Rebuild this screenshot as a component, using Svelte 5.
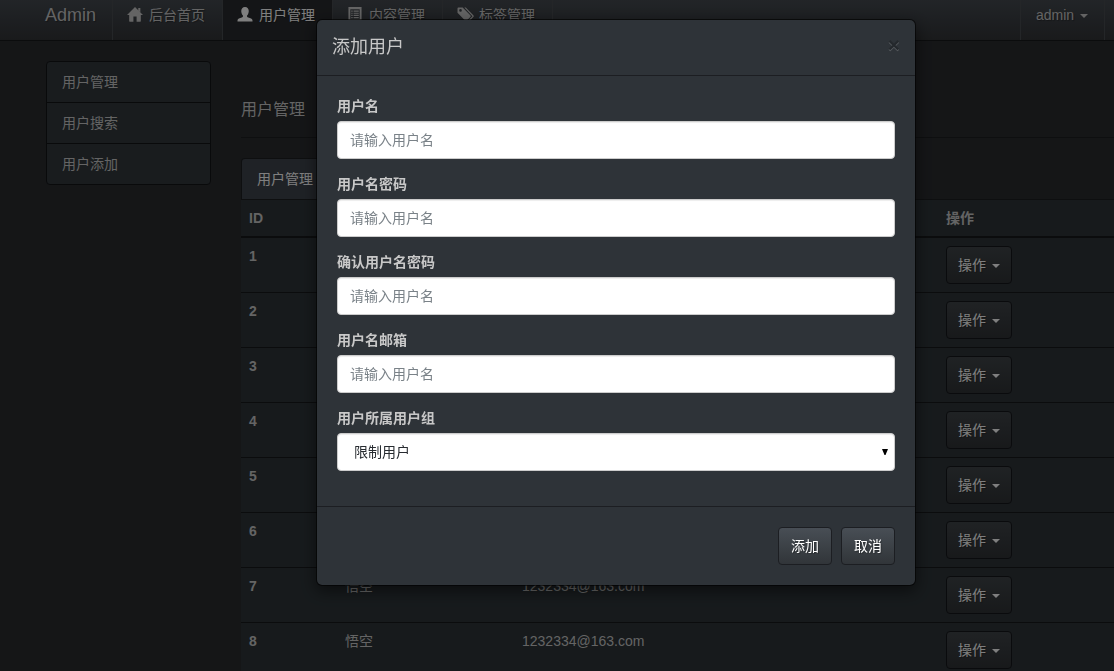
<script>
  const nav = [
    { icon: 'home', label: '后台首页' },
    { icon: 'user', label: '用户管理', active: true },
    { icon: 'list', label: '内容管理' },
    { icon: 'tags', label: '标签管理' },
  ];
  const side = ['用户管理', '用户搜索', '用户添加'];
  const rows = [1, 2, 3, 4, 5, 6, 7, 8].map((id) => ({ id, name: '悟空', email: '1232334@163.com' }));
  const fields = [
    { id: 'username', label: '用户名', type: 'text' },
    { id: 'password', label: '用户名密码', type: 'password' },
    { id: 'confirm', label: '确认用户名密码', type: 'password' },
    { id: 'email', label: '用户名邮箱', type: 'email' },
  ];
</script>

<div class="page">
  <header class="navbar">
    <a class="brand" href="#home">Admin</a>
    <nav class="links">
      {#each nav as item}
        <a class="link" class:active={item.active} href="#{item.icon}">
          <svg class="icon" viewBox="0 0 16 16" aria-hidden="true">
            {#if item.icon === 'home'}
              <path d="M8 0 16.500 8.500h-2.300V15a.6.6 0 0 1-.6.6H9.700V10H6.300v5.600H2.400a.6.6 0 0 1-.6-.6V8.500H-.5L8 0zM11.500 1h2.200v4.500l-2.200-2z" />
            {:else if item.icon === 'user'}
              <path d="M8 0c2.600 0 4 1.800 4 4.300 0 2-.7 3.700-1.800 4.800-.3 1 .2 1.700 1.300 2.200 2 .8 4.500 1.300 4.500 3V15.500H0v-1.200c0-1.700 2.500-2.200 4.500-3 1.100-.5 1.600-1.200 1.300-2.200C4.700 8 4 6.300 4 4.300 4 1.800 5.400 0 8 0z" />
            {:else if item.icon === 'list'}
              <path fill-rule="evenodd" d="M1 0h14v15H1zM3 2.500V13h10V2.500zM4 3.700h1.500V5H4zm2.500 0H12V5H6.500zM4 6h1.500v1.300H4zm2.500 0H12v1.300H6.500zM4 8.300h1.500v1.300H4zm2.500 0H12v1.300H6.500zM4 10.600h1.500v1.300H4zm2.500 0H12v1.300H6.500z" />
            {:else}
              <path fill-rule="evenodd" d="M0 1.500V6l8.300 8.700a1 1 0 0 0 1.400 0l4.200-4.200a1 1 0 0 0 0-1.400L5.500.5H1a1 1 0 0 0-1 1zm3.200.7a1.400 1.400 0 1 1 0 2.800 1.400 1.400 0 0 1 0-2.800z" />
              <path d="M7.300.5h1.500l8.300 8.600a1 1 0 0 1 0 1.400l-4.500 4.600-.9-.9 4.200-4.400z" />
            {/if}
          </svg>
          <span>{item.label}</span>
        </a>
      {/each}
    </nav>
    <button class="account" type="button">admin <span class="caret"></span></button>
  </header>

  <div class="columns">
    <aside>
      <ul class="list">
        {#each side as label}
          <li><a href="#side">{label}</a></li>
        {/each}
      </ul>
    </aside>
    <main>
      <h1>用户管理</h1>
      <div class="tabs"><a class="tab" href="#tab">用户管理</a></div>
      <table>
        <colgroup><col class="c-id" /><col class="c-name" /><col /><col class="c-op" /></colgroup>
        <thead>
          <tr><th>ID</th><th>用户名</th><th>邮箱</th><th>操作</th></tr>
        </thead>
        <tbody>
          {#each rows as row}
            <tr>
              <th scope="row">{row.id}</th>
              <td>{row.name}</td>
              <td>{row.email}</td>
              <td><button class="btn" type="button">操作 <span class="caret"></span></button></td>
            </tr>
          {/each}
        </tbody>
      </table>
    </main>
  </div>
</div>

<div class="backdrop">
  <form class="modal" role="dialog" aria-labelledby="modal-title">
    <div class="modal-head">
      <h2 id="modal-title">添加用户</h2>
      <button class="close" type="button" aria-label="关闭">×</button>
    </div>
    <div class="modal-body">
      {#each fields as field}
        <div class="group">
          <label for={field.id}>{field.label}</label>
          <input id={field.id} type={field.type} placeholder="请输入用户名" />
        </div>
      {/each}
      <div class="group">
        <label for="role">用户所属用户组</label>
        <div class="select">
          <select id="role"><option>限制用户</option></select>
          <svg class="arrow" viewBox="0 0 6 6" aria-hidden="true"><path d="M0 0h6L3.500 6h-1z" /></svg>
        </div>
      </div>
    </div>
    <div class="modal-foot">
      <button class="btn" type="button">添加</button>
      <button class="btn" type="button">取消</button>
    </div>
  </form>
</div>

<style>
  :global(body) {
    background: #272b30;
  }
  .page,
  .backdrop,
  button,
  input,
  select {
    box-sizing: border-box;
    font-family: 'Liberation Sans', 'Noto Sans CJK SC', sans-serif;
    font-size: 14px;
    line-height: 20px;
  }
  .page {
    height: 100vh;
    overflow: hidden;
    background: #2a2c2f;
    color: #c8c8c8;
  }
  a {
    color: inherit;
    text-decoration: none;
  }

  .navbar {
    display: flex;
    height: 40px;
    padding-left: 30px;
    padding-right: 9px;
    border-bottom: 1px solid #17191b;
    background: linear-gradient(#454a50, #3b3f44 50%, #333537);
    text-shadow: 1px 1px 1px rgba(0, 0, 0, 0.3);
  }
  .brand {
    padding: 5px 16px 5px 15px;
    font-size: 18px;
  }
  .links {
    display: flex;
    flex: 1;
    border-left: 1px solid #494c50;
  }
  .link {
    display: flex;
    gap: 6px;
    padding: 5px 17px 5px 14px;
    border-right: 1px solid #494c50;
    white-space: nowrap;
  }
  .active {
    background: #292b2e;
    color: #fff;
  }
  .icon {
    width: 16px;
    height: 15px;
    margin-top: 2px;
    fill: currentColor;
    overflow: visible;
  }
  .account {
    padding: 5px 16px 15px 15px;
    border: 0;
    border-left: 1px solid #494c50;
    border-right: 1px solid #494c50;
    background: none;
    color: inherit;
    text-shadow: inherit;
  }
  .caret {
    display: inline-block;
    margin-left: 2px;
    vertical-align: middle;
    border: 4px solid transparent;
    border-top-color: currentColor;
    border-bottom: 0;
  }

  .columns {
    display: flex;
    gap: 30px;
    padding-left: 46px;
  }
  aside {
    flex: 0 0 165px;
    padding-top: 20px;
  }
  .list {
    margin: 0;
    padding: 0;
    list-style: none;
    border: 1px solid #131517;
    border-radius: 4px;
    background: #32393d;
  }
  .list a {
    display: block;
    padding: 10px 15px;
  }
  .list li + li {
    border-top: 1px solid #131517;
  }
  main {
    flex: 1;
    min-width: 0;
  }
  h1 {
    margin: 0 0 20px;
    padding: 59px 0 17px;
    border-bottom: 1px solid #1c1e20;
    font-size: 16px;
    line-height: 20px;
    font-weight: 400;
  }
  .tabs {
    display: flex;
    border-bottom: 1px solid #1c1e20;
  }
  .tab {
    padding: 10px 15px;
    border: 1px solid #1c1e20;
    border-bottom: 0;
    border-radius: 4px 4px 0 0;
    background: #3e444c;
    color: #fff;
  }

  table {
    width: 100%;
    table-layout: fixed;
    border-collapse: separate;
    border-spacing: 0;
    background: #2e3539;
  }
  .c-id {
    width: 96px;
  }
  .c-name {
    width: 177px;
  }
  .c-op {
    width: 176px;
  }
  th,
  td {
    padding: 8px;
    border-bottom: 1px solid #17191b;
    text-align: left;
    vertical-align: top;
  }
  thead th {
    border-bottom-width: 2px;
  }

  .btn {
    height: 38px;
    padding: 8px 12px;
    border: 1px solid #1c1e22;
    border-radius: 4px;
    background: linear-gradient(#484e55, #3a3f44 60%, #313539);
    color: #fff;
    text-shadow: 1px 1px 1px rgba(0, 0, 0, 0.3);
  }
  td .btn {
    display: block;
    padding: 8px 11px;
    border-color: #15171a;
    background: linear-gradient(#404549, #303336);
  }

  .backdrop {
    position: fixed;
    inset: 0;
    display: flex;
    justify-content: center;
    align-items: flex-start;
    padding: 19px 0 0 118px;
    background: rgba(0, 0, 0, 0.5);
  }
  .modal {
    box-sizing: border-box;
    width: 600px;
    max-width: 100%;
    border: 1px solid rgba(0, 0, 0, 0.6);
    border-radius: 6px;
    background: #2e3338;
    background-clip: padding-box;
    box-shadow: 0 5px 15px rgba(0, 0, 0, 0.5);
    color: #c8c8c8;
  }
  .modal-head {
    display: flex;
    justify-content: space-between;
    padding: 15px;
    border-bottom: 1px solid #1c1e22;
  }
  h2 {
    margin: 0;
    font-size: 18px;
    line-height: 25px;
    font-weight: 400;
  }
  .close {
    height: 20px;
    padding: 0;
    border: 0;
    background: none;
    color: #000;
    font-size: 21px;
    font-weight: 700;
    opacity: 0.2;
    text-shadow: 0 1px 0 #fff;
  }
  .modal-body {
    padding: 20px;
  }
  .group {
    margin-bottom: 15px;
  }
  label {
    display: block;
    margin-bottom: 5px;
    font-weight: 700;
  }
  input,
  select {
    display: block;
    width: 100%;
    height: 38px;
    padding: 8px 12px;
    border: 1px solid #ccc;
    border-radius: 4px;
    background: #fff;
    box-shadow: inset 0 1px 1px rgba(0, 0, 0, 0.075);
    color: #272b30;
  }
  input::placeholder {
    color: #7a8288;
    opacity: 1;
  }
  .select {
    position: relative;
  }
  select {
    appearance: none;
    padding-left: 16px;
  }
  .arrow {
    position: absolute;
    top: 16px;
    right: 7px;
    width: 6px;
    height: 6px;
    pointer-events: none;
  }
  .modal-foot {
    display: flex;
    justify-content: flex-end;
    gap: 9px;
    padding: 20px;
    border-top: 1px solid #1c1e22;
  }
</style>
